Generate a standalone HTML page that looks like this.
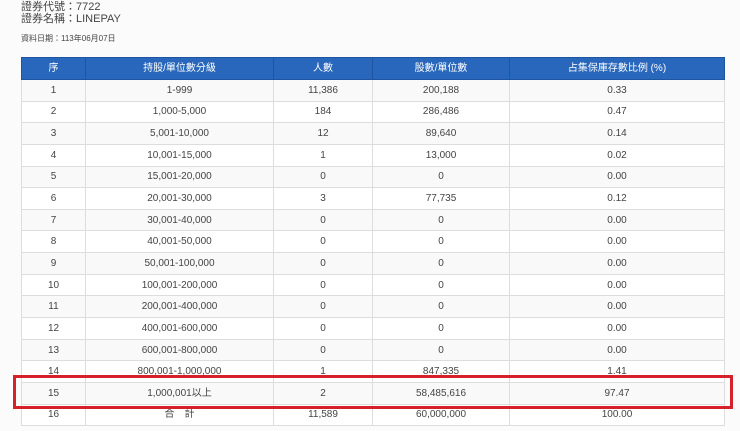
<!DOCTYPE html>
<html><head><meta charset="utf-8"><style>
body{margin:0;background:#fbfbfb;font-family:"Liberation Sans","Noto Sans CJK TC",sans-serif;color:#333;width:740px;height:431px;overflow:hidden;position:relative}
.t1{position:absolute;left:21px;top:1px;font-size:11px;line-height:12px;color:#444}
.t2{position:absolute;left:21px;top:34px;font-size:8px;line-height:10px;color:#444}
table{position:absolute;left:21px;top:57px;border-collapse:collapse;width:703px;font-size:10px;line-height:11px;table-layout:fixed}
th{background:#2867bb;color:#fff;font-weight:normal;height:21px;border:1px solid #1d55a0;padding:0}
td{height:20.65px;border:1px solid #ddd;text-align:center;padding:0;background:#fff;color:#444}
tr:nth-child(even) td{background:#f9f9f9}
.red{position:absolute;left:13px;top:375px;width:714px;height:28px;border:3px solid #d7202a}
</style></head><body>
<div class="t1">證券代號：7722<br>證券名稱：LINEPAY</div>
<div class="t2">資料日期：113年06月07日</div>
<table>
<colgroup><col style="width:64px"><col style="width:188px"><col style="width:99px"><col style="width:137px"><col style="width:215px"></colgroup>
<tr><th>序</th><th>持股/單位數分級</th><th>人數</th><th>股數/單位數</th><th>占集保庫存數比例 (%)</th></tr>
<tr><td>1</td><td>1-999</td><td>11,386</td><td>200,188</td><td>0.33</td></tr>
<tr><td>2</td><td>1,000-5,000</td><td>184</td><td>286,486</td><td>0.47</td></tr>
<tr><td>3</td><td>5,001-10,000</td><td>12</td><td>89,640</td><td>0.14</td></tr>
<tr><td>4</td><td>10,001-15,000</td><td>1</td><td>13,000</td><td>0.02</td></tr>
<tr><td>5</td><td>15,001-20,000</td><td>0</td><td>0</td><td>0.00</td></tr>
<tr><td>6</td><td>20,001-30,000</td><td>3</td><td>77,735</td><td>0.12</td></tr>
<tr><td>7</td><td>30,001-40,000</td><td>0</td><td>0</td><td>0.00</td></tr>
<tr><td>8</td><td>40,001-50,000</td><td>0</td><td>0</td><td>0.00</td></tr>
<tr><td>9</td><td>50,001-100,000</td><td>0</td><td>0</td><td>0.00</td></tr>
<tr><td>10</td><td>100,001-200,000</td><td>0</td><td>0</td><td>0.00</td></tr>
<tr><td>11</td><td>200,001-400,000</td><td>0</td><td>0</td><td>0.00</td></tr>
<tr><td>12</td><td>400,001-600,000</td><td>0</td><td>0</td><td>0.00</td></tr>
<tr><td>13</td><td>600,001-800,000</td><td>0</td><td>0</td><td>0.00</td></tr>
<tr><td>14</td><td>800,001-1,000,000</td><td>1</td><td>847,335</td><td>1.41</td></tr>
<tr><td>15</td><td>1,000,001以上</td><td>2</td><td>58,485,616</td><td>97.47</td></tr>
<tr><td>16</td><td>合　計</td><td>11,589</td><td>60,000,000</td><td>100.00</td></tr>
</table>
<div class="red"></div>
</body></html>
